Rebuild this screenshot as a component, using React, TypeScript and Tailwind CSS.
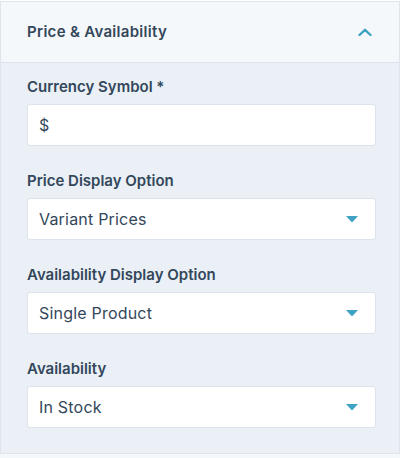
import React from 'react';

const font = { fontFamily: '"Inter", "Noto Sans", sans-serif' };

const Caret = () => (
  <svg width="12" height="7" viewBox="0 0 12 7" className="shrink-0">
    <path d="M0 0 H12 L6 6.5 Z" fill="#3ea3c3" />
  </svg>
);

const Field: React.FC<{ label: string; value: string; select?: boolean }> = ({ label, value, select }) => (
  <div className="flex flex-col">
    <label className="text-[15px] font-semibold text-[#33475b] leading-[20px] mb-[7px]">{label}</label>
    <div className="h-[42px] bg-white border border-[#dde3ea] rounded-[3px] flex items-center justify-between pl-[11px] pr-[17px]">
      <span className="text-[16px] tracking-[0.2px] text-[#33475b]">{value}</span>
      {select && <Caret />}
    </div>
  </div>
);

const App: React.FC = () => {
  return (
    <div className="w-[400px] h-[458px] bg-[#f5f8fa]" style={font}>
      <div className="mt-[1px] border-t border-l border-r border-[#dfe3eb]">
        {/* Header */}
        <div className="h-[61px] bg-[#f5f8fa] border-b border-[#dfe3eb] flex items-center justify-between pl-[26px] pr-[27px]">
          <span className="text-[15px] tracking-[0.3px] font-semibold text-[#33475b]">Price &amp; Availability</span>
          <svg width="14" height="8" viewBox="0 0 14 8">
            <path d="M1.5 7 L7 1.8 L12.5 7" fill="none" stroke="#3ea3c3" strokeWidth="2.4" strokeLinecap="round" strokeLinejoin="round" />
          </svg>
        </div>

        {/* Body */}
        <div className="bg-[#eaf0f6] border-b border-[#dfe3eb] pl-[26px] pr-[23px] pt-[14px] pb-[25px] flex flex-col gap-[25px]">
          <Field label="Currency Symbol *" value="$" />
          <Field label="Price Display Option" value="Variant Prices" select />
          <Field label="Availability Display Option" value="Single Product" select />
          <Field label="Availability" value="In Stock" select />
        </div>
      </div>
    </div>
  );
};

export default App;
